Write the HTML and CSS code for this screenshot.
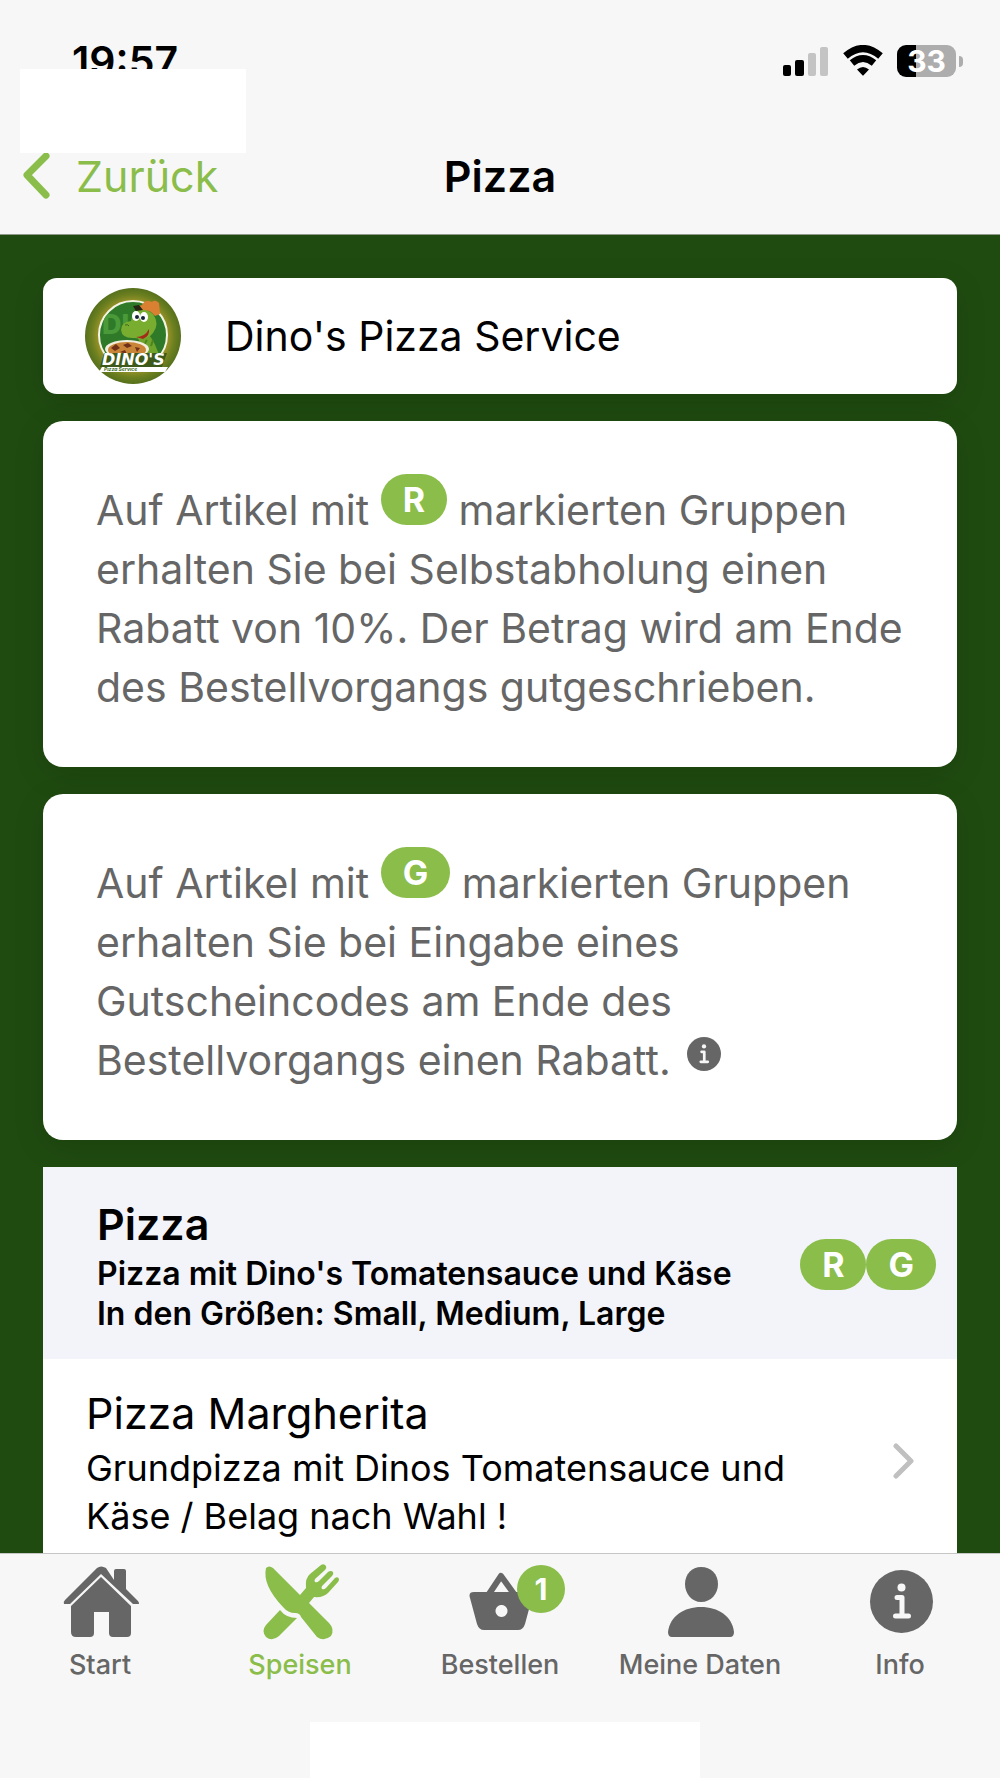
FILE: index.html
```html
<!DOCTYPE html>
<html lang="de">
<head>
    <meta charset="utf-8">
    <meta name="viewport" content="width=device-width, initial-scale=1">
    <title>Pizza - Dino's Pizza Service</title>
    <link rel="stylesheet" href="styles.css">
</head>
<body>
    <header class="header">
        <div class="status-bar">
            <span class="time">19:57</span>
            <div class="status-icons">
                <svg width="46" height="32" viewBox="0 0 46 32">
                    <rect x="0" y="20" width="8" height="11" rx="2"/>
                    <rect x="12" y="15" width="9" height="16" rx="2"/>
                    <rect x="25" y="8" width="8" height="23" rx="2" fill="#c4c4c4"/>
                    <rect x="37" y="2" width="8" height="29" rx="2" fill="#c4c4c4"/>
                </svg>
                <svg width="40" height="32" viewBox="0 0 40 32">
                    <path d="M2.500 11 Q20 -4 37.500 11" fill="none" stroke="#000" stroke-width="7"/>
                    <path d="M9 18 Q20 9 31 18" fill="none" stroke="#000" stroke-width="7"/>
                    <path d="M14 24.500 Q20 19.500 26 24.500 L20.800 30 Q20 31 19.200 30 Z"/>
                </svg>
                <div class="battery"><span>33</span></div>
            </div>
            <div class="blank blank-top"></div>
        </div>
        <nav class="nav-bar">
            <a class="back" href="#">
                <svg width="28" height="46" viewBox="0 0 28 46" fill="none" stroke="currentColor" stroke-width="7" stroke-linecap="round" stroke-linejoin="round">
                    <path d="M24 3 L5 22 L24 42"/>
                </svg>
                Zurück
            </a>
            <h1>Pizza</h1>
        </nav>
    </header>

    <main class="content">
        <section class="card shop">
            <svg class="logo" viewBox="0 0 96 96">
                <defs>
                    <radialGradient id="rim">
                        <stop offset="0.66" stop-color="#ab9a2a"/>
                        <stop offset="0.86" stop-color="#6d8020"/>
                        <stop offset="1" stop-color="#56701c"/>
                    </radialGradient>
                    <clipPath id="inner"><circle cx="48" cy="47" r="33"/></clipPath>
                </defs>
                <circle cx="48" cy="48" r="48" fill="url(#rim)"/>
                <circle cx="48" cy="47" r="34" fill="#2f7a28" stroke="#f4f4e4" stroke-width="2"/>
                <g clip-path="url(#inner)">
                    <text x="17" y="46" font-size="27" font-weight="800" fill="#4a9a3a">DI</text>
                </g>
                <!-- dino -->
                <path d="M60 42 Q68 50 73 64 L75 76 H55 Q60 62 52 48 Z" fill="#6fa52c"/>
                <path d="M48 25 Q57 17 68 26 Q75 36 68 45 Q62 53 50 50 Q37 51 36 42 Q36 34 46 33 Z" fill="#78ad30"/>
                <path d="M51 49 Q60 49 64 41 Q65 48 58 51 Z" fill="#a52a19"/>
                <path d="M40 37 Q43 36 44 38" fill="none" stroke="#39691a" stroke-width="1"/>
                <ellipse cx="51" cy="28" rx="4" ry="5" fill="#fff"/>
                <ellipse cx="59" cy="29" rx="4" ry="5" fill="#fff"/>
                <circle cx="52" cy="29" r="2" fill="#17233a"/>
                <circle cx="58" cy="30" r="2" fill="#17233a"/>
                <path d="M57 17 Q60 11 67 14 Q70 11 74 15 L75 26 L70 28 Q65 21 57 22 L50 19 Z" fill="#d98032"/>
                <path d="M48 18 L54 17 L58 22 L51 23 Z" fill="#252514"/>
                <path d="M62 52 Q58 57 61 62 M68 52 L66 58" fill="none" stroke="#4b851f" stroke-width="2"/>
                <!-- pizza -->
                <ellipse cx="42" cy="61" rx="22" ry="9" fill="#f2eee0"/>
                <ellipse cx="42" cy="62" rx="19" ry="8" fill="#c98537"/>
                <path d="M26 60 l5 -4 4 4 -5 3z M38 57 l5 -2 4 3 -5 2z M50 59 l5 1 -3 4z M35 64 l5 -2 2 4z" fill="#71301a"/>
                <path d="M19 65 H82 L77 79 H15 Z" fill="#3d5a1b"/>
                <text class="logo-name" x="17" y="77" font-size="16">DINO'S</text>
                <path d="M17 79 H83 L80 84 H14 Z" fill="#fff"/>
                <text x="19" y="83" font-size="5" font-weight="700" font-style="italic" fill="#39691a">Pizza Service</text>
            </svg>
            <h2>Dino's Pizza Service</h2>
        </section>

        <section class="card note">
            <p>Auf Artikel mit <span class="pill">R</span> markierten Gruppen erhalten Sie bei Selbstabholung einen Rabatt von 10%. Der Betrag wird am Ende des Bestellvorgangs gutgeschrieben.</p>
        </section>

        <section class="card note">
            <p>Auf Artikel mit <span class="pill">G</span> markierten Gruppen erhalten Sie bei Eingabe eines Gutscheincodes am Ende des Bestellvorgangs einen Rabatt.
                <button class="info-button" type="button" aria-label="Info">
                    <svg width="34" height="34" viewBox="10 10 63 63"><use href="#info-icon"/></svg>
                </button>
            </p>
        </section>

        <section class="group">
            <div class="group-head">
                <div class="group-text">
                    <h2>Pizza</h2>
                    <p>Pizza mit Dino's Tomatensauce und Käse<br>In den Größen: Small, Medium, Large</p>
                </div>
                <div class="pills">
                    <span class="pill">R</span>
                    <span class="pill">G</span>
                </div>
            </div>
            <a class="item" href="#">
                <div class="item-text">
                    <h3>Pizza Margherita</h3>
                    <p>Grundpizza mit Dinos Tomatensauce und Käse / Belag nach Wahl !</p>
                </div>
                <svg width="22" height="38" viewBox="0 0 22 38" fill="none" stroke="#c0c0c0" stroke-width="5" stroke-linecap="round" stroke-linejoin="round">
                    <path d="M3 4 L18 19 L3 34"/>
                </svg>
            </a>
        </section>
    </main>

    <nav class="tab-bar">
        <a class="tab" href="#">
            <svg viewBox="0 0 80 82">
                <path d="M54 20 V11 Q54 9 56 9 H64 Q66 9 66 11 V29 L78 41 Q79 42 79 44 H73 L41 14 L10 44 H4 Q3 42 5 40 L37 8 Q41 5 46 8 Z"/>
                <path d="M41 17 L71 46 V73 Q71 77 67 77 H53 Q49 77 49 73 V52 H34 V73 Q34 77 30 77 H16 Q11 77 11 72 V46 Z"/>
            </svg>
            Start
        </a>
        <a class="tab active" href="#">
            <svg viewBox="0 0 80 82">
                <path d="M6 8 Q9 5 13 8 L40 35 L46 28 Q45 18 50 14 L61 5 Q64 3 66 6 Q67 8 65 10 L55 19 Q54 21 55 22 Q57 23 59 21 L68 12 Q71 10 73 12 Q74 14 72 16 L62 26 Q61 28 62 29 Q64 30 66 28 L75 18 Q78 16 79 19 Q79 21 78 22 L68 33 Q63 38 54 37 L49 43 L69 63 Q75 69 71 76 Q64 82 57 77 L41 57 Q40 53 35 53 Q28 53 23 47 Q2 25 6 8 Z"/>
                <path d="M20 50 Q26 58 37 58 L19 76 Q12 82 6 77 Q1 71 6 65 Z"/>
            </svg>
            Speisen
        </a>
        <a class="tab" href="#">
            <svg viewBox="0 0 80 82">
                <path d="M29 34 L41 16 L54 34" fill="none" stroke="currentColor" stroke-width="6" stroke-linejoin="round"/>
                <path fill-rule="evenodd" d="M14 32 H68 Q73 32 72 38 L65 64 Q63 70 58 70 H24 Q19 70 17 64 L10 38 Q8 32 14 32 Z M41 45 a6 6 0 1 0 1 0 Z"/>
            </svg>
            Bestellen
            <span class="count">1</span>
        </a>
        <a class="tab" href="#">
            <svg viewBox="0 0 80 82">
                <path d="M41 7 C51 7 58 14 58 24 C58 34 51 42 41 42 C32 42 25 34 25 24 C25 14 32 7 41 7 Z"/>
                <path d="M8 72 C10 56 24 47 41 47 C58 47 72 56 74 72 Q74 77 70 77 H12 Q8 77 8 72 Z"/>
            </svg>
            Meine Daten
        </a>
        <a class="tab" href="#">
            <svg viewBox="0 0 80 82">
                <g id="info-icon">
                    <circle cx="41.500" cy="41.500" r="31.500"/>
                    <circle cx="41.500" cy="27.500" r="4" fill="#f7f7f7"/>
                    <path d="M37 37.500 H42 V56 M35.500 56 H48.500" fill="none" stroke="#f7f7f7" stroke-width="5" stroke-linecap="round" stroke-linejoin="round"/>
                </g>
            </svg>
            Info
        </a>
        <div class="blank blank-bottom"></div>
    </nav>
</body>
</html>
```

FILE: styles.css
```css
* { box-sizing: border-box; }
body {
    margin: 0;
    height: 100vh;
    display: flex;
    flex-direction: column;
    overflow: hidden;
    font-family: Inter, "Liberation Sans", sans-serif;
    color: #000;
    background-color: #1f4b10;
}
h1, h2, h3, p { margin: 0; }
a { color: inherit; text-decoration: none; }

/* Header */
.header { background-color: #f7f7f7; border-bottom: 1px solid #8f9a8b; }
.status-bar {
    position: relative;
    display: flex;
    justify-content: space-between;
    align-items: center;
    height: 122px;
    padding: 0 44px 0 72px;
}
.time { font-size: 41px; font-weight: 600; }
.status-icons { display: flex; align-items: center; gap: 14px; }
.battery {
    position: relative;
    width: 59px;
    height: 32px;
    border-radius: 9px;
    background: linear-gradient(to right, #000 33%, #adadad 33%);
    color: #fff;
    font-size: 30px;
    font-weight: 700;
    line-height: 33px;
    text-align: center;
}
.battery::after {
    content: "";
    position: absolute;
    right: -7px;
    top: 11px;
    width: 4px;
    height: 11px;
    border-radius: 0 6px 6px 0;
    background-color: #adadad;
}
.blank { position: absolute; background-color: #fff; }
.blank-top { left: 20px; top: 69px; width: 226px; height: 84px; z-index: 1; }
.nav-bar {
    display: grid;
    grid-template-columns: 1fr auto 1fr;
    align-items: center;
    height: 112px;
    padding: 0 22px 4px;
}
.nav-bar h1 { font-size: 43px; font-weight: 600; }
.back { display: flex; align-items: center; gap: 26px; font-size: 43px; color: #8abd4a; }

/* Content */
.content {
    flex: 1;
    min-height: 0;
    overflow: hidden;
    display: flex;
    flex-direction: column;
    gap: 27px;
    padding: 43px 43px 0;
}
.content > * { flex-shrink: 0; }
.card {
    background-color: #fff;
    border-radius: 20px;
    box-shadow: 0 8px 32px rgba(0, 0, 0, 0.12);
}
.shop {
    display: flex;
    align-items: center;
    gap: 44px;
    padding: 10px 42px;
    border-radius: 14px;
}
.shop h2 { font-size: 41px; font-weight: 400; }
.logo { width: 96px; height: 96px; }
.logo-name { fill: #fff; font-family: "DejaVu Sans", sans-serif; font-weight: 700; font-style: italic; }
.note { padding: 53px 36px 50px 53px; color: #666; font-size: 41px; line-height: 59px; }
.pill {
    display: inline-block;
    padding: 0 22px;
    border-radius: 26px;
    background-color: #8abd4a;
    color: #fff;
    font-size: 34px;
    font-weight: 700;
    line-height: 51px;
    vertical-align: 13px;
}
.info-button {
    margin-left: 5px;
    padding: 0;
    border: 0;
    background: none;
    vertical-align: 4px;
    line-height: 0;
}
.info-button svg { fill: #666; }

.group { background-color: #fff; }
.group-head {
    display: flex;
    justify-content: space-between;
    align-items: center;
    padding: 27px 21px 25px 54px;
    background-color: #f3f4f9;
}
.group-head h2 { font-size: 43px; font-weight: 600; line-height: 60px; }
.group-head p { font-size: 32px; font-weight: 600; line-height: 40px; }
.pills { display: flex; }
.item {
    display: flex;
    justify-content: space-between;
    align-items: center;
    padding: 23px 42px 30px 43px;
}
.item-text { max-width: 740px; }
.item h3 { font-size: 43px; font-weight: 400; line-height: 62px; }
.item p { font-size: 36px; line-height: 48px; }

/* Tabs */
.tab-bar {
    position: relative;
    display: grid;
    grid-template-columns: repeat(5, 1fr);
    height: 225px;
    background-color: #f7f7f7;
    border-top: 1px solid #c6c6c6;
}
.tab {
    position: relative;
    display: flex;
    flex-direction: column;
    align-items: center;
    padding-top: 6px;
    color: #666;
    font-size: 27px;
    font-weight: 500;
    line-height: 45px;
}
.tab svg { width: 80px; height: 82px; fill: currentColor; }
.tab.active { color: #8abd4a; }
.count {
    position: absolute;
    left: 50%;
    top: 11px;
    width: 48px;
    height: 48px;
    margin-left: 17px;
    border-radius: 50%;
    background-color: #8abd4a;
    color: #fff;
    font-size: 30px;
    font-weight: 700;
    line-height: 48px;
    text-align: center;
}
.blank-bottom { left: 31%; right: 30%; bottom: 0; height: 56px; }
```
